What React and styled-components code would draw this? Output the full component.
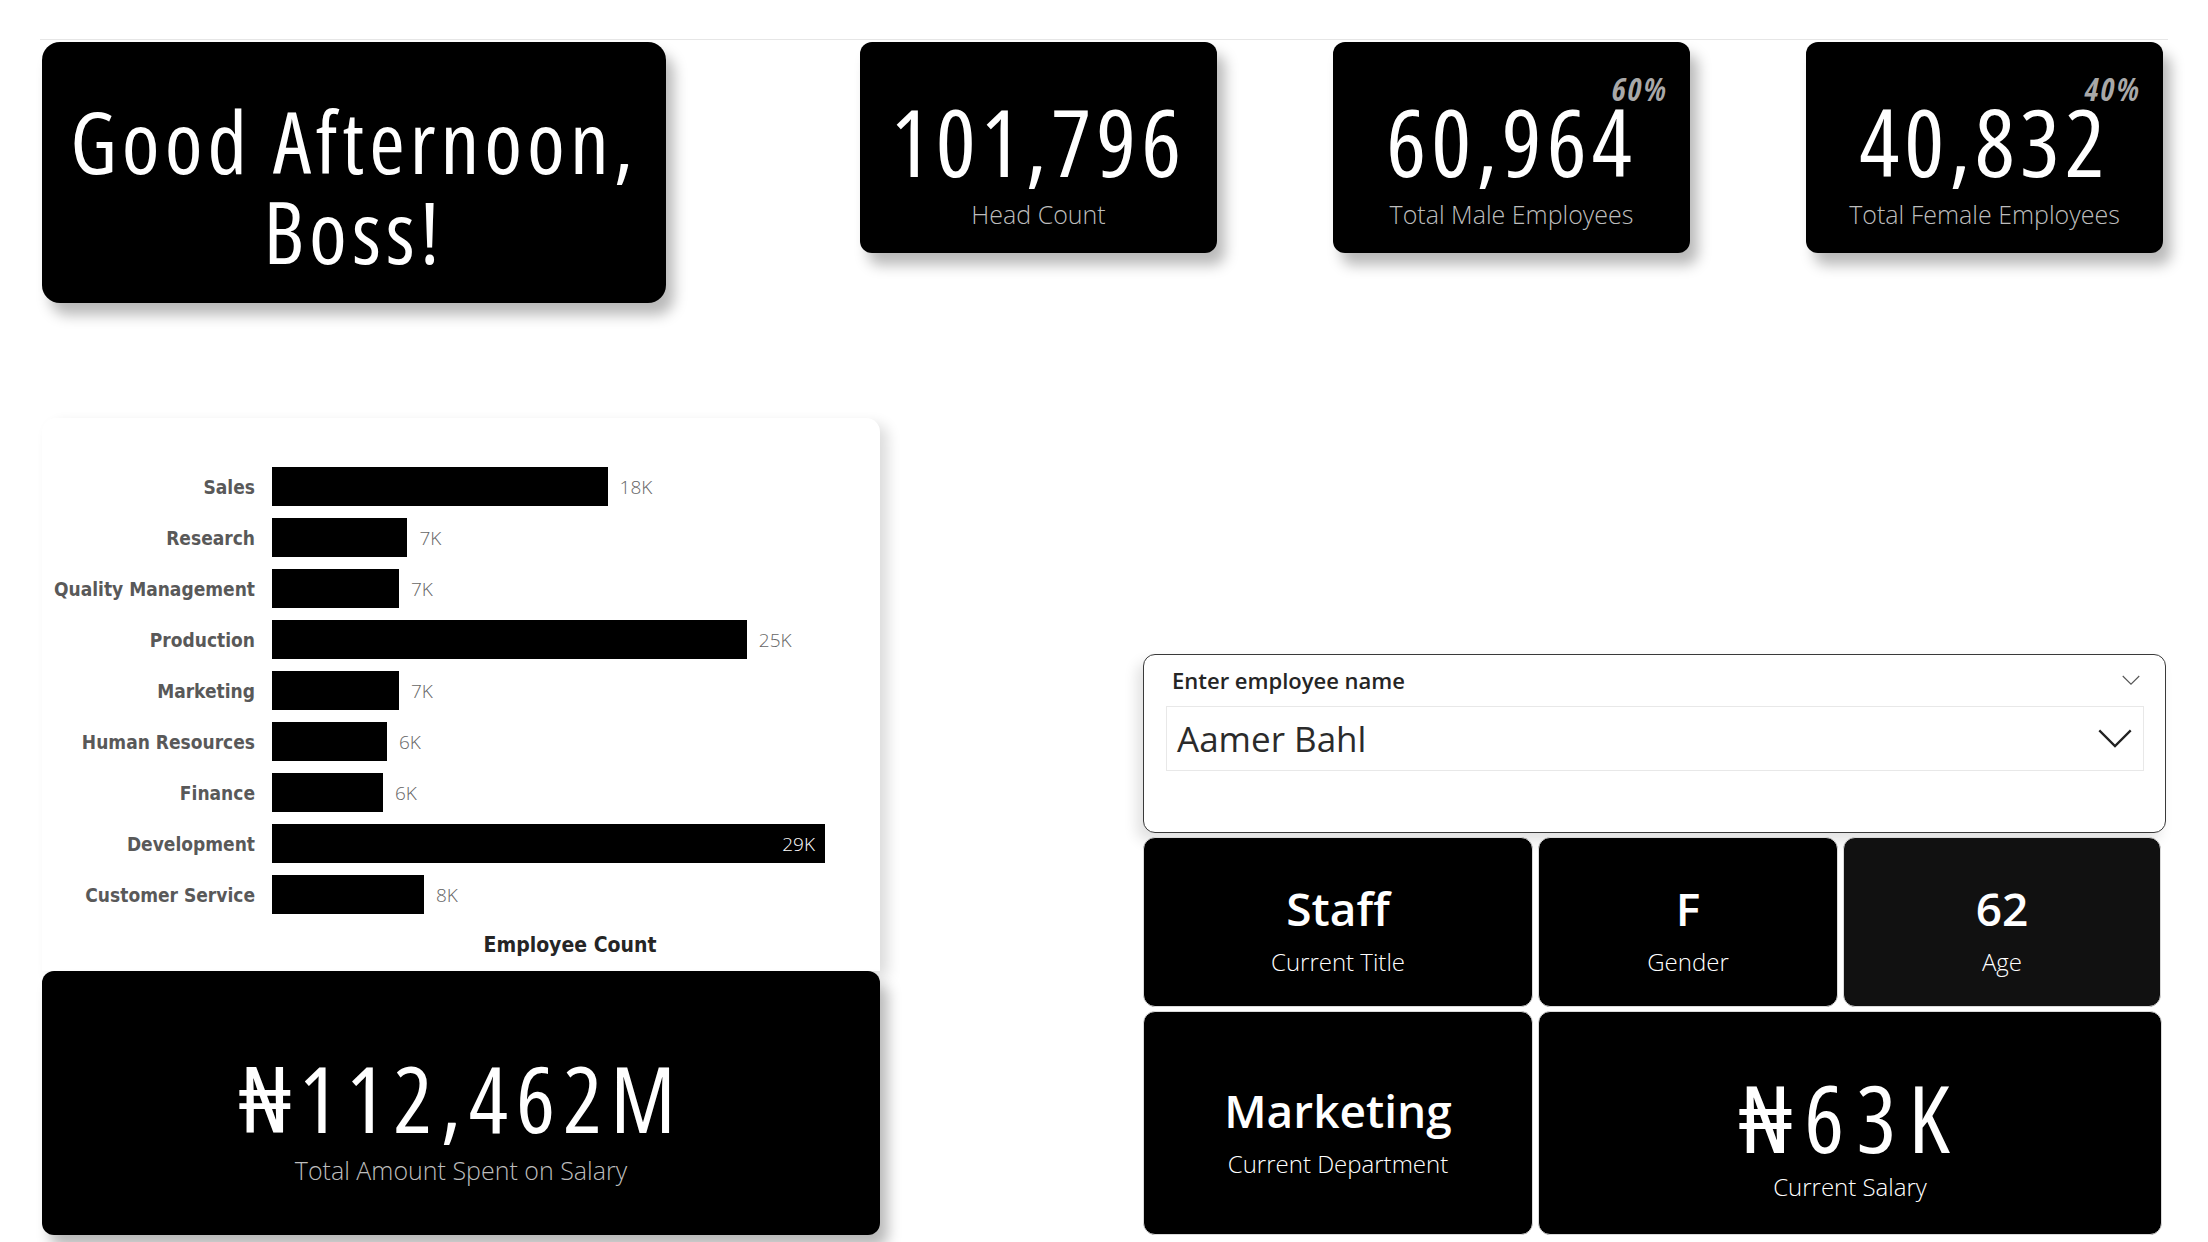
import React from 'react';
import styled, { createGlobalStyle } from 'styled-components';

const din = `"Open Sans", "Noto Sans", "DejaVu Sans", sans-serif`;
const segoe = `"Open Sans", "Noto Sans", sans-serif`;
const chartFont = `"DejaVu Sans", sans-serif`;

const GlobalStyle = createGlobalStyle`
  html, body {
    margin: 0;
    padding: 0;
    background: #ffffff;
  }
  body {
    width: 2208px;
    height: 1242px;
    overflow: hidden;
    font-family: ${segoe};
  }
`;

const Canvas = styled.main`
  margin: 39px 40px 0 40px;
  border-top: 1px solid #e6e6e6;
  padding: 2px 0 0 2px;
`;

const TopRow = styled.section`
  display: flex;
  align-items: flex-start;
`;

const BlackCard = styled.div`
  background: ${p => p.bg || '#000'};
  color: #fff;
  border-radius: ${p => p.radius || 12}px;
  box-shadow: ${p => p.flat ? 'none' : '8px 12px 14px rgba(0, 0, 0, 0.28)'};
  display: flex;
  flex-direction: column;
  align-items: center;
  justify-content: center;
  box-sizing: border-box;
  position: relative;
`;

const Greeting = styled(BlackCard)`
  width: 624px;
  height: 261px;
  padding-top: 27px;
  font-family: ${din};
  font-stretch: condensed;
  font-size: 86px;
  line-height: 90px;
  text-align: center;
  letter-spacing: 5px;
  white-space: nowrap;
`;

const KpiRow = styled.div`
  display: flex;
  gap: 116px;
  margin-left: 194px;
`;

const Kpi = styled(BlackCard)`
  width: 357px;
  height: 211px;
  padding-top: 26px;
`;

const BigNumber = styled.div`
  font-family: ${din};
  font-stretch: condensed;
  font-size: ${p => p.size || 94}px;
  line-height: 100px;
  letter-spacing: ${p => p.spacing ?? 5}px;
  white-space: nowrap;
`;

const KpiLabel = styled.div`
  font-family: ${segoe};
  font-weight: 300;
  font-size: ${p => p.size || 25}px;
  line-height: 32px;
  margin-top: ${p => p.gap || 3}px;
  color: ${p => p.color || '#bdbdbd'};
  white-space: nowrap;
`;

const Share = styled.span`
  position: absolute;
  top: 25px;
  right: 22px;
  font-family: ${din};
  font-stretch: condensed;
  font-style: italic;
  font-weight: bold;
  font-size: 32px;
  letter-spacing: 2px;
  color: #a8a8a8;
`;

const BottomRow = styled.section`
  display: grid;
  grid-template-columns: 838px 1023px;
  column-gap: 263px;
  align-items: end;
  margin-top: 115px;
`;

const Column = styled.div`
  display: flex;
  flex-direction: column;
  gap: ${p => p.gap || 0}px;
`;

const ChartCard = styled.div`
  height: 553px;
  box-sizing: border-box;
  background: #fff;
  border-radius: 14px 14px 0 0;
  box-shadow: 8px 6px 14px rgba(0, 0, 0, 0.14);
  padding-top: 43px;
`;

const ChartGrid = styled.div`
  display: grid;
  grid-template-columns: 213px 596px;
  grid-auto-rows: 51px;
  column-gap: 17px;
  align-items: center;
`;

const CategoryLabel = styled.div`
  text-align: right;
  font-family: ${chartFont};
  font-stretch: condensed;
  font-weight: bold;
  font-size: 19px;
  color: #595959;
  white-space: nowrap;
`;

const BarLine = styled.div`
  display: flex;
  align-items: center;
`;

const Bar = styled.div`
  height: 39px;
  background: #000;
  display: flex;
  align-items: center;
  justify-content: flex-end;
  box-sizing: border-box;
  padding-right: 10px;
`;

const BarValue = styled.span`
  font-family: ${segoe};
  font-weight: 300;
  font-size: 19px;
  color: ${p => p.inside ? '#fff' : '#666'};
  margin-left: ${p => p.inside ? 0 : 12}px;
`;

const AxisTitle = styled.div`
  grid-column: 2;
  text-align: center;
  font-family: ${chartFont};
  font-stretch: condensed;
  font-weight: bold;
  font-size: 21px;
  color: #252525;
  align-self: start;
  margin-top: 13px;
`;

const SalaryTotal = styled(BlackCard)`
  height: 264px;
  padding-top: 28px;
`;

const SelectCard = styled.div`
  height: 179px;
  box-sizing: border-box;
  border: 1.5px solid #3a3a3a;
  border-radius: 12px;
  background: #fff;
  padding: 10px 21px 0 22px;
  box-shadow: -6px 8px 14px rgba(0, 0, 0, 0.12);
`;

const SelectHeader = styled.div`
  display: flex;
  align-items: center;
  justify-content: space-between;
  height: 30px;
  padding: 0 4px 0 6px;
  font-family: ${segoe};
  font-weight: 600;
  font-size: 22px;
  color: #252525;
`;

const SelectBox = styled.div`
  margin-top: 11px;
  height: 65px;
  box-sizing: border-box;
  border: 1px solid #e8e8e8;
  display: flex;
  align-items: center;
  justify-content: space-between;
  padding: 0 10px 0 10px;
  font-family: ${segoe};
  font-size: 35px;
  color: #2b2b2b;
`;

const DetailRow = styled.div`
  display: grid;
  grid-template-columns: ${p => p.cols};
  gap: 5px;
  height: ${p => p.height}px;
`;

const Detail = styled(BlackCard)`
  padding-top: ${p => p.offset || 20}px;
  border: 1px solid #d9d9d9;
`;

const DetailValue = styled.div`
  font-family: ${segoe};
  font-weight: 600;
  font-size: 46px;
  line-height: 56px;
`;

const departments = [
  { name: 'Sales', value: 17.6, label: '18K' },
  { name: 'Research', value: 7.1, label: '7K' },
  { name: 'Quality Management', value: 6.66, label: '7K' },
  { name: 'Production', value: 24.9, label: '25K' },
  { name: 'Marketing', value: 6.66, label: '7K' },
  { name: 'Human Resources', value: 6.03, label: '6K' },
  { name: 'Finance', value: 5.82, label: '6K' },
  { name: 'Development', value: 29, label: '29K', inside: true },
  { name: 'Customer Service', value: 7.97, label: '8K' },
];

const MAX_BAR = 553;

function Chevron({ size = 14, weight = 1, color = '#777' }) {
  return (
    <svg width={size} height={size / 2 + 2} viewBox="0 0 24 14" fill="none">
      <path d="M1 1 L12 12 L23 1" stroke={color} strokeWidth={weight} />
    </svg>
  );
}

export default function App() {
  return (
    <>
      <GlobalStyle />
      <Canvas>
        <TopRow>
          <Greeting radius={18}>
            <div>Good Afternoon,</div>
            <div>Boss!</div>
          </Greeting>
          <KpiRow>
            <Kpi>
              <BigNumber>101,796</BigNumber>
              <KpiLabel gap={7}>Head Count</KpiLabel>
            </Kpi>
            <Kpi>
              <Share>60%</Share>
              <BigNumber>60,964</BigNumber>
              <KpiLabel gap={7}>Total Male Employees</KpiLabel>
            </Kpi>
            <Kpi>
              <Share>40%</Share>
              <BigNumber>40,832</BigNumber>
              <KpiLabel gap={7}>Total Female Employees</KpiLabel>
            </Kpi>
          </KpiRow>
        </TopRow>

        <BottomRow>
          <Column>
            <ChartCard>
              <ChartGrid>
                {departments.map(d => (
                  <React.Fragment key={d.name}>
                    <CategoryLabel>{d.name}</CategoryLabel>
                    <BarLine>
                      <Bar style={{ width: `${(d.value / 29) * MAX_BAR}px` }}>
                        {d.inside && <BarValue inside>{d.label}</BarValue>}
                      </Bar>
                      {!d.inside && <BarValue>{d.label}</BarValue>}
                    </BarLine>
                  </React.Fragment>
                ))}
                <AxisTitle>Employee Count</AxisTitle>
              </ChartGrid>
            </ChartCard>
            <SalaryTotal radius={12}>
              <BigNumber size={92} spacing={8}>₦112,462M</BigNumber>
              <KpiLabel gap={6}>Total Amount Spent on Salary</KpiLabel>
            </SalaryTotal>
          </Column>

          <Column gap={4}>
            <SelectCard>
              <SelectHeader>
                <span>Enter employee name</span>
                <Chevron size={18} weight={1.5} color="#555" />
              </SelectHeader>
              <SelectBox>
                <span>Aamer Bahl</span>
                <Chevron size={36} weight={1.6} color="#222" />
              </SelectBox>
            </SelectCard>
            <DetailRow cols="390px 300px 318px" height={170}>
              <Detail flat offset={14}>
                <DetailValue>Staff</DetailValue>
                <KpiLabel color="#fff" size={24} gap={10}>Current Title</KpiLabel>
              </Detail>
              <Detail flat offset={14}>
                <DetailValue>F</DetailValue>
                <KpiLabel color="#fff" size={24} gap={10}>Gender</KpiLabel>
              </Detail>
              <Detail flat bg="#111" offset={14}>
                <DetailValue>62</DetailValue>
                <KpiLabel color="#fff" size={24} gap={10}>Age</KpiLabel>
              </Detail>
            </DetailRow>
            <DetailRow cols="390px 624px" height={224}>
              <Detail flat offset={16}>
                <DetailValue>Marketing</DetailValue>
                <KpiLabel color="#fff" size={24} gap={10}>Current Department</KpiLabel>
              </Detail>
              <Detail flat offset={24}>
                <BigNumber size={94} spacing={12}>₦63K</BigNumber>
                <KpiLabel color="#fff" size={24} gap={4}>Current Salary</KpiLabel>
              </Detail>
            </DetailRow>
          </Column>
        </BottomRow>
      </Canvas>
    </>
  );
}
